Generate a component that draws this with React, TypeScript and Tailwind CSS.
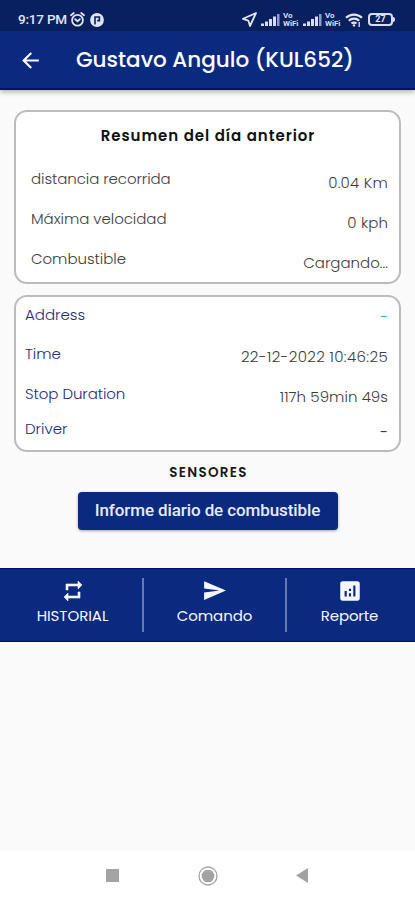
import React from "react";
import { MdAnalytics, MdArrowBack, MdSend } from "react-icons/md";

const geometric = "font-['Poppins','Inter',sans-serif]";

function Signal() {
  return (
    <svg className="shrink-0" width="19" height="13" viewBox="0 0 19 13" fill="#d7def3">
      <rect x="0" y="10.5" width="3" height="2.5" />
      <rect x="4" y="8.5" width="3" height="4.5" />
      <rect x="8" y="6" width="3" height="7" />
      <rect x="12" y="3.5" width="3" height="9.5" />
      <rect x="16" y="1" width="2.5" height="12" opacity=".65" />
    </svg>
  );
}

function VoWifi() {
  return (
    <div className="flex w-[17px] shrink-0 flex-col font-['Roboto',sans-serif] text-[8px] font-bold leading-[8px] tracking-[-0.1px] text-[#d7def3]">
      <span>Vo</span>
      <span>WiFi</span>
    </div>
  );
}

function Alarm() {
  return (
    <svg className="shrink-0" width="15" height="15" viewBox="0 0 15 15" fill="none" stroke="#e0e5f5" strokeWidth="1.8" strokeLinecap="round">
      <circle cx="7.5" cy="8.2" r="5.4" />
      <path d="M1 3.3 3.8 1M14 3.3 11.2 1M5.2 7.2l2.3 2 2.3-2" />
    </svg>
  );
}

function Repeat() {
  return (
    <svg width="24" height="24" viewBox="0 0 24 24" fill="currentColor" stroke="currentColor" strokeWidth="0.6">
      <path d="M7 7h10v3l4-4-4-4v3H5v6h2V7zm10 10H7v-3l-4 4 4 4v-3h12v-6h-2v4z" />
    </svg>
  );
}

function StatusBar() {
  return (
    <div className="flex h-[31px] shrink-0 items-center bg-[#08205f] pt-[8px] pl-[18px] text-[#e0e5f5]">
      <span className="w-[52px] shrink-0 whitespace-nowrap font-['Roboto',sans-serif] text-[13.5px] font-medium tracking-[-0.2px]">9:17 PM</span>
      <Alarm />
      <svg className="ml-[5px] shrink-0" width="14" height="14" viewBox="0 0 14 14">
        <circle cx="7" cy="7" r="6.9" fill="#e0e5f5" />
        <path d="M5 11.6V4h4.4v3.6H7.2" fill="none" stroke="#08205f" strokeWidth="1.6" />
      </svg>
      <svg className="ml-[138px] shrink-0" width="15" height="15" viewBox="0 0 15 15" fill="none" stroke="#e0e5f5" strokeWidth="1.8" strokeLinejoin="round">
        <path d="M14 1 1 6.8l5.3 1.8L8 14z" />
      </svg>
      <div className="ml-[4px] flex shrink-0 items-center">
        <Signal />
        <div className="ml-[3px]"><VoWifi /></div>
        <div className="ml-[3px] flex"><Signal /></div>
        <div className="ml-[3px]"><VoWifi /></div>
      </div>
      <svg className="ml-[3px] shrink-0" width="18" height="14" viewBox="0 0 18 14" fill="none" stroke="#e0e5f5" strokeWidth="2.2">
        <path d="M1 4.8a11.5 11.5 0 0 1 16 0M3.8 7.8a7.5 7.5 0 0 1 10.4 0M6.5 10.6a3.5 3.5 0 0 1 5 0" />
        <circle cx="9" cy="12.4" r="1.2" fill="#e0e5f5" stroke="none" />
        <path d="M14.2 9v5" strokeWidth="1.3" />
      </svg>
      <div className="ml-[5px] flex shrink-0 items-center">
        <div className="flex h-[13px] w-[25px] items-center justify-center rounded-[4px] border-2 border-[#d7def3] font-['Roboto',sans-serif] text-[9px] font-bold leading-none">27</div>
        <div className="h-[5px] w-[2px] rounded-r bg-[#d7def3]" />
      </div>
    </div>
  );
}

type RowProps = { label: string; value: string; row: string; labelClass: string; valueClass: string };

function Row({ label, value, row, labelClass, valueClass }: RowProps) {
  return (
    <div className={`flex justify-between whitespace-nowrap text-[15px] font-light leading-5 ${row}`}>
      <span className={labelClass}>{label}</span>
      <span className={valueClass}>{value}</span>
    </div>
  );
}

export default function App() {
  return (
    <div className={`flex h-[900px] w-[415px] flex-col overflow-hidden bg-[#fafafa] ${geometric}`}>
      <StatusBar />
      <header className="flex h-[59px] shrink-0 items-center border-b-2 border-[#03107a] bg-[#0a2a80] pt-px pl-[18px] text-white shadow-[0_2px_5px_rgba(0,0,0,0.3)]">
        <MdArrowBack className="mt-px" size={25} />
        <h1 className="ml-[33px] whitespace-nowrap text-[21.5px] font-medium leading-8">Gustavo Angulo (KUL652)</h1>
      </header>

      <section className="mx-[14px] mt-[20px] h-[174px] shrink-0 rounded-[13px] border-2 border-[#bcbcbc] bg-white pr-[11px] pl-[15px] text-[#3d3d3d]">
        <h2 className="mt-[13px] -ml-[3px] text-center text-[15px] font-semibold leading-[22px] tracking-[0.95px] text-[#111]">Resumen del día anterior</h2>
        <Row label="distancia recorrida" value="0.04 Km" row="mt-[22px] h-[40px]" labelClass="tracking-[-0.08px]" valueClass="mt-[4px] tracking-[0.2px]" />
        <Row label="Máxima velocidad" value="0 kph" row="h-[40px]" labelClass="tracking-[-0.05px]" valueClass="mt-[4px] tracking-[0.1px]" />
        <Row label="Combustible" value="Cargando..." row="h-[35px]" labelClass="tracking-[-0.05px]" valueClass="mt-[4px]" />
      </section>

      <section className="mx-[14px] mt-[11px] h-[157px] shrink-0 rounded-[13px] border-2 border-[#bcbcbc] bg-white pt-[8px] pr-[11px] pl-[9px] text-[#3d3d3d]">
        <Row label="Address" value="-" row="h-[39px]" labelClass="text-[#262c78]" valueClass="mt-[2px] font-normal text-[#45adb8]" />
        <Row label="Time" value="22-12-2022 10:46:25" row="h-[40px]" labelClass="text-[#262c78]" valueClass="mt-[3px] tracking-[0.35px]" />
        <Row label="Stop Duration" value="117h 59min 49s" row="h-[35px]" labelClass="text-[#262c78] tracking-[-0.08px]" valueClass="mt-[3px] tracking-[0.05px]" />
        <Row label="Driver" value="-" row="h-[26px]" labelClass="text-[#262c78]" valueClass="mt-[3px] font-normal" />
      </section>

      <h3 className="mt-[11px] pl-[2px] text-center text-[13.5px] font-semibold leading-5 tracking-[1.3px] text-[#181818]">SENSORES</h3>
      <button className="mx-auto mt-[9px] h-[38px] w-[260px] shrink-0 whitespace-nowrap rounded-[4px] bg-[#0a2a80] pb-px font-['Roboto',sans-serif] text-[17px] font-medium tracking-[-0.1px] text-[#e7eafa] shadow-[0_1px_3px_rgba(0,0,0,0.35)]">Informe diario de combustible</button>

      <nav className="mt-[38px] flex h-[74px] shrink-0 items-center border-y border-[#050b73] bg-[#0a2a80] text-[15px] leading-[22px] text-[#f5f6ff]">
        <div className="flex w-[142px] flex-col items-center pb-[5px] pl-[3px]">
          <Repeat />
          <span className="mt-[2px] tracking-[-0.05px]">HISTORIAL</span>
        </div>
        <div className="h-[54px] w-[2px] bg-[#6579b3]" />
        <div className="flex w-[141px] flex-col items-center pb-[5px]">
          <MdSend size={25} />
          <span className="mt-[2px] tracking-[-0.1px]">Comando</span>
        </div>
        <div className="h-[54px] w-[2px] bg-[#6579b3]" />
        <div className="flex flex-1 flex-col items-center pr-[3px] pb-[5px]">
          <MdAnalytics size={26} />
          <span className="mt-px tracking-[-0.15px]">Reporte</span>
        </div>
      </nav>

      <footer className="mt-auto flex h-[49px] shrink-0 items-center bg-white pl-[106px]">
        <div className="h-[13px] w-[13px] bg-[#a3a3a3]" />
        <svg className="ml-[79px]" width="20" height="20" viewBox="0 0 20 20">
          <circle cx="10" cy="10" r="9" fill="none" stroke="#a3a3a3" strokeWidth="1.3" />
          <circle cx="10" cy="10" r="6.3" fill="#a3a3a3" />
        </svg>
        <svg className="ml-[77px]" width="14" height="15" viewBox="0 0 14 15">
          <path d="M1 7.5 13 0v15z" fill="#a3a3a3" />
        </svg>
      </footer>
    </div>
  );
}
